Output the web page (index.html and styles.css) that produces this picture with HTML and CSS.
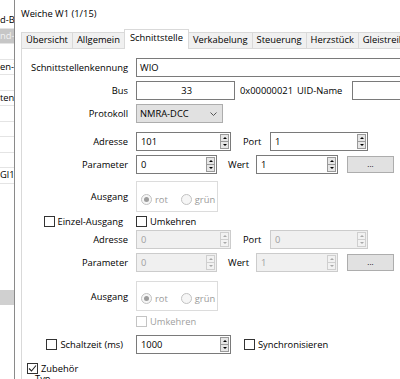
FILE: index.html
```html
<!DOCTYPE html>
<html lang="de">
<head>
<meta charset="utf-8">
<title>Weiche W1</title>
<link rel="stylesheet" href="styles.css">
</head>
<body>
<div class="screen">
  <div class="strip">
    <div class="srow">d-B</div>
    <div class="srow sel">nd-</div>
    <div class="srow"></div>
    <div class="srow">en-V</div>
    <div class="srow"></div>
    <div class="srow">ten</div>
    <div class="srow"></div>
    <div class="srow"></div>
    <div class="srow"></div>
    <div class="srow"></div>
    <div class="srow">Gl1-</div>
    <div class="sspace"></div>
    <div class="sbar"></div>
  </div>
  <div class="dialog">
    <div class="titlebar">Weiche W1 (1/15)</div>
    <div class="body">
      <div class="tabs">
        <div class="tab">Übersicht</div>
        <div class="tab">Allgemein</div>
        <div class="tab active">Schnittstelle</div>
        <div class="tab">Verkabelung</div>
        <div class="tab">Steuerung</div>
        <div class="tab">Herzstück</div>
        <div class="tab">Gleistreiber</div>
      </div>
      <div class="pane">
        <div class="row r1">
          <div class="lbl">Schnittstellenkennung</div>
          <div class="field wide">WIO</div>
        </div>
        <div class="row r2">
          <div class="lbl">Bus</div>
          <div class="field bus">33</div>
          <div class="hex">0x00000021</div>
          <div class="uidl">UID-Name</div>
          <div class="field uid"></div>
        </div>
        <div class="row r3">
          <div class="lbl">Protokoll</div>
          <div class="combo"><span>NMRA-DCC</span><svg class="chev" width="7" height="4" viewBox="0 0 7 4"><polyline points="0.5,0.5 3.5,3.5 6.5,0.5" fill="none" stroke="#555" stroke-width="1"/></svg></div>
        </div>
        <div class="row r4">
          <div class="lbl">Adresse</div>
          <div class="spin s95"><span class="val">101</span><span class="btns"><span class="sb up"></span><span class="sb dn"></span></span></div>
          <div class="flbl port">Port</div>
          <div class="spin s98"><span class="val">1</span><span class="btns"><span class="sb up"></span><span class="sb dn"></span></span></div>
        </div>
        <div class="row r5">
          <div class="lbl">Parameter</div>
          <div class="spin s81"><span class="val">0</span><span class="btns"><span class="sb up"></span><span class="sb dn"></span></span></div>
          <div class="flbl wert">Wert</div>
          <div class="spin s82"><span class="val">1</span><span class="btns"><span class="sb up"></span><span class="sb dn"></span></span></div>
          <div class="btn">...</div>
        </div>
        <div class="row grp r6">
          <div class="lbl">Ausgang</div>
          <div class="gbox"><span class="radio on"></span><span class="rl">rot</span><span class="radio second"></span><span class="rl">grün</span></div>
        </div>
        <div class="row chk r7">
          <div class="lbl ck"><span class="cb"></span><span>Einzel-Ausgang</span></div>
          <div class="ckitem"><span class="cb"></span><span>Umkehren</span></div>
        </div>
        <div class="row r8">
          <div class="lbl">Adresse</div>
          <div class="spin s95 dis"><span class="val">0</span><span class="btns"><span class="sb up"></span><span class="sb dn"></span></span></div>
          <div class="flbl port">Port</div>
          <div class="spin s98 dis"><span class="val">0</span><span class="btns"><span class="sb up"></span><span class="sb dn"></span></span></div>
        </div>
        <div class="row r9">
          <div class="lbl">Parameter</div>
          <div class="spin s81 dis"><span class="val">0</span><span class="btns"><span class="sb up"></span><span class="sb dn"></span></span></div>
          <div class="flbl wert">Wert</div>
          <div class="spin s82 dis"><span class="val">1</span><span class="btns"><span class="sb up"></span><span class="sb dn"></span></span></div>
          <div class="btn">...</div>
        </div>
        <div class="row grp r10">
          <div class="lbl">Ausgang</div>
          <div class="gbox"><span class="radio on"></span><span class="rl">rot</span><span class="radio second"></span><span class="rl">grün</span></div>
        </div>
        <div class="row chk r11">
          <div class="lbl"></div>
          <div class="ckitem dis"><span class="cb"></span><span>Umkehren</span></div>
        </div>
        <div class="row r12">
          <div class="lbl ck"><span class="cb"></span><span>Schaltzeit (ms)</span></div>
          <div class="spin s95"><span class="val">1000</span><span class="btns"><span class="sb up"></span><span class="sb dn"></span></span></div>
          <div class="ckitem sync"><span class="cb"></span><span>Synchronisieren</span></div>
        </div>
        <div class="row chk r13">
          <div class="ckitem zub"><span class="cb on"><svg width="9" height="9" viewBox="0 0 9 9"><polyline points="1,4.5 3.5,7 8,1.5" fill="none" stroke="#222" stroke-width="1.1"/></svg></span><span>Zubehör</span></div>
        </div>
        <div class="typ">Typ</div>
      </div>
    </div>
  </div>
</div>
</body>
</html>
```

FILE: styles.css
```css
* { box-sizing: border-box; }
html, body { margin: 0; padding: 0; }
body {
  width: 400px;
  height: 379px;
  overflow: hidden;
  background: #fff;
  color: #000;
  font-family: "Open Sans", "Noto Sans", sans-serif;
  font-size: 9.35px;
}
.screen { display: flex; height: 379px; }

/* background list */
.strip {
  width: 14px;
  flex: none;
  padding-top: 13px;
  display: flex;
  flex-direction: column;
  overflow: hidden;
  background: #fff;
}
.srow {
  flex: none;
  height: 15.5px;
  line-height: 14.5px;
  border-bottom: 1px solid #e4e4e4;
  white-space: nowrap;
  overflow: hidden;
}
.srow.sel { background: #c6c6c6; color: #f2f2f2; }
.sspace { flex: none; height: 106.5px; }
.sbar { flex: none; height: 15px; background: #d0d0d0; }

/* dialog */
.dialog {
  flex: 1;
  min-width: 0;
  border-left: 1px solid #8a8a8a;
  display: flex;
  flex-direction: column;
  overflow: hidden;
}
.titlebar {
  flex: none;
  height: 29px;
  line-height: 27px;
  padding-left: 6px;
  background: #fff;
  white-space: nowrap;
}
.body {
  flex: 1;
  padding-left: 6px;
  background: #fff;
  display: flex;
  flex-direction: column;
}
.tabs {
  flex: none;
  display: flex;
  align-items: flex-end;
  height: 20px;
  margin-bottom: -1px;
  white-space: nowrap;
}
.tab {
  flex: none;
  height: 16px;
  margin-bottom: 1px;
  padding: 0 4px;
  line-height: 13px;
  background: #f0f0f0;
  border-top: 1px solid #d9d9d9;
  border-right: 1px solid #d9d9d9;
}
.tab:first-child { border-left: 1px solid #d9d9d9; }
.tab.active {
  position: relative;
  height: 20px;
  margin-bottom: 0;
  margin-left: -1px;
  padding: 0 5px;
  line-height: 16px;
  background: #fff;
  border-left: 1px solid #d9d9d9;
}
.pane {
  flex: 1;
  border-top: 1px solid #d9d9d9;
  border-left: 1px solid #d9d9d9;
  background: #fff;
  display: flex;
  flex-direction: column;
}

/* form rows */
.row {
  flex: none;
  display: flex;
  align-items: center;
  height: 19px;
  white-space: nowrap;
}
.r1 { margin-top: 9px; }
.r2, .r3, .r5, .r9 { margin-top: 4px; }
.r4 { margin-top: 9px; }
.grp { height: 31px; }
.r6 { margin-top: 7px; }
.chk { height: 16px; }
.r7 { margin-top: 1px; }
.r8 { margin-top: 1px; }
.r10 { margin-top: 9px; height: 30px; }
.r11 { margin-top: 2px; }
.r12 { margin-top: 6px; }
.r13 { margin-top: 8px; height: 12px; }

.lbl {
  flex: none;
  width: 106px;
  margin-right: 8px;
  text-align: right;
}
.lbl.ck {
  display: flex;
  justify-content: flex-end;
  align-items: center;
  padding-right: 5px;
}

.field {
  flex: none;
  height: 19px;
  border: 1px solid #7a7a7a;
  background: #fff;
  display: flex;
  align-items: center;
  padding-left: 3px;
}
.field.wide { width: 300px; }
.field.bus { width: 99px; justify-content: flex-end; padding-right: 42px; }
.field.uid { width: 100px; }
.hex { flex: none; width: 57px; margin-left: 5px; }
.uidl { flex: none; width: 55px; }

.combo {
  flex: none;
  width: 87px;
  height: 19px;
  border: 1px solid #adadad;
  background: #e1e1e1;
  display: flex;
  align-items: center;
  padding-left: 3px;
}
.chev { margin-left: auto; margin-right: 5px; }

.spin {
  flex: none;
  height: 19px;
  border: 1px solid #7a7a7a;
  background: #fff;
  display: flex;
}
.s95 { width: 95px; }
.s98 { width: 98px; }
.s81 { width: 81px; }
.s82 { width: 82px; }
.val {
  flex: 1;
  padding-left: 4px;
  display: flex;
  align-items: center;
}
.btns {
  flex: none;
  width: 9px;
  margin: 1px 1px 1px 0;
  display: flex;
  flex-direction: column;
}
.sb {
  flex: 1;
  border: 1px solid #9a9a9a;
  background: #e6e6e6;
  color: #000;
  display: flex;
  align-items: center;
  justify-content: center;
}
.sb.dn { border-top: none; }
.sb.up::after {
  content: "";
  border-left: 2px solid transparent;
  border-right: 2px solid transparent;
  border-bottom: 2px solid currentColor;
}
.sb.dn::after {
  content: "";
  border-left: 2px solid transparent;
  border-right: 2px solid transparent;
  border-top: 2px solid currentColor;
}
.spin.dis { border-color: #cccccc; background: #f0f0f0; color: #a0a0a0; }
.spin.dis .sb { border-color: #cfcfcf; background: #f2f2f2; color: #a8a8a8; }

.flbl { flex: none; }
.port { width: 27px; margin-left: 12px; }
.wert { width: 28px; margin-left: 11px; }

.btn {
  flex: none;
  width: 47px;
  height: 17px;
  margin-left: 9px;
  border: 1px solid #adadad;
  background: #e1e1e1;
  display: flex;
  align-items: center;
  justify-content: center;
  font-size: 8px;
  padding-bottom: 2px;
}

.gbox {
  flex: none;
  width: 82px;
  height: 100%;
  border: 1px solid #dcdcdc;
  display: flex;
  align-items: center;
  padding: 5px 0 0 4px;
  color: #9a9a9a;
}
.radio {
  flex: none;
  width: 11px;
  height: 11px;
  border: 1px solid #c2c2c2;
  border-radius: 50%;
  background: #f6f6f6;
  display: flex;
  align-items: center;
  justify-content: center;
}
.radio.on::after {
  content: "";
  width: 5px;
  height: 5px;
  border-radius: 50%;
  background: #9c9c9c;
}
.radio.second { margin-left: 13px; }
.rl { margin-left: 3px; }

.ckitem { flex: none; display: flex; align-items: center; }
.cb {
  flex: none;
  width: 11px;
  height: 11px;
  margin-right: 3px;
  border: 1px solid #333;
  background: #fff;
  display: flex;
  align-items: center;
  justify-content: center;
}
.ckitem.dis { color: #a0a0a0; }
.ckitem.dis .cb { border-color: #c4c4c4; }
.sync { margin-left: 13px; }
.zub { margin-left: 5px; }
.typ { flex: none; padding-left: 13px; line-height: 9px; height: 9px; }
```
